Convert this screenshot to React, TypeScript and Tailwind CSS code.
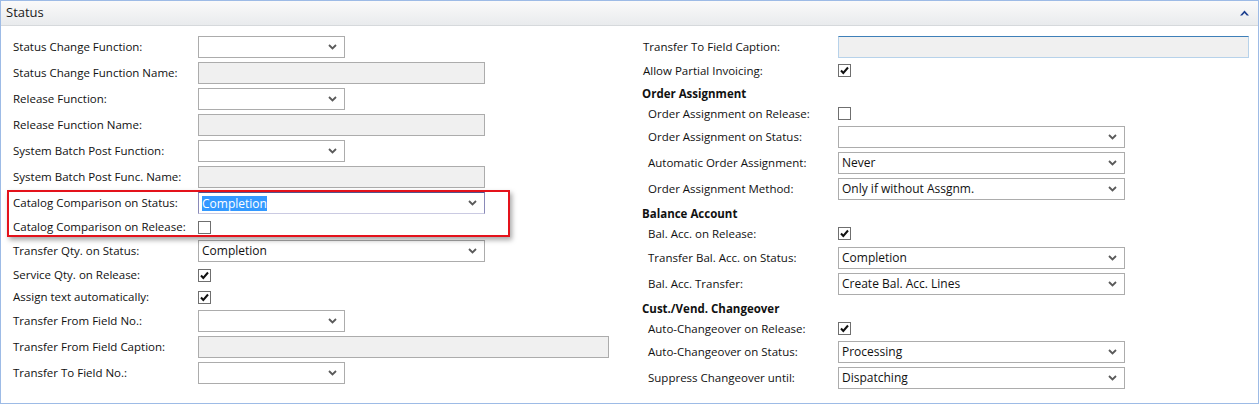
import React from 'react';

type Row =
  | { kind: 'select'; label: string; width: number; value?: string; focused?: boolean; indent?: boolean }
  | { kind: 'field'; label: string; width: number; focused?: boolean; indent?: boolean }
  | { kind: 'check'; label: string; checked: boolean; indent?: boolean }
  | { kind: 'head'; label: string };

const leftRows: Row[] = [
  { kind: 'select', label: 'Status Change Function:', width: 147 },
  { kind: 'field', label: 'Status Change Function Name:', width: 287 },
  { kind: 'select', label: 'Release Function:', width: 147 },
  { kind: 'field', label: 'Release Function Name:', width: 287 },
  { kind: 'select', label: 'System Batch Post Function:', width: 147 },
  { kind: 'field', label: 'System Batch Post Func. Name:', width: 287 },
  { kind: 'select', label: 'Catalog Comparison on Status:', width: 287, value: 'Completion', focused: true },
  { kind: 'check', label: 'Catalog Comparison on Release:', checked: false },
  { kind: 'select', label: 'Transfer Qty. on Status:', width: 287, value: 'Completion' },
  { kind: 'check', label: 'Service Qty. on Release:', checked: true },
  { kind: 'check', label: 'Assign text automatically:', checked: true },
  { kind: 'select', label: 'Transfer From Field No.:', width: 147 },
  { kind: 'field', label: 'Transfer From Field Caption:', width: 411 },
  { kind: 'select', label: 'Transfer To Field No.:', width: 147 },
];

const rightRows: Row[] = [
  { kind: 'field', label: 'Transfer To Field Caption:', width: 411, focused: true },
  { kind: 'check', label: 'Allow Partial Invoicing:', checked: true },
  { kind: 'head', label: 'Order Assignment' },
  { kind: 'check', label: 'Order Assignment on Release:', checked: false, indent: true },
  { kind: 'select', label: 'Order Assignment on Status:', width: 287, indent: true },
  { kind: 'select', label: 'Automatic Order Assignment:', width: 287, value: 'Never', indent: true },
  { kind: 'select', label: 'Order Assignment Method:', width: 287, value: 'Only if without Assgnm.', indent: true },
  { kind: 'head', label: 'Balance Account' },
  { kind: 'check', label: 'Bal. Acc. on Release:', checked: true, indent: true },
  { kind: 'select', label: 'Transfer Bal. Acc. on Status:', width: 287, value: 'Completion', indent: true },
  { kind: 'select', label: 'Bal. Acc. Transfer:', width: 287, value: 'Create Bal. Acc. Lines', indent: true },
  { kind: 'head', label: 'Cust./Vend. Changeover' },
  { kind: 'check', label: 'Auto-Changeover on Release:', checked: true, indent: true },
  { kind: 'select', label: 'Auto-Changeover on Status:', width: 287, value: 'Processing', indent: true },
  { kind: 'select', label: 'Suppress Changeover until:', width: 287, value: 'Dispatching', indent: true },
];

const Arrow = () => (
  <svg width="9" height="6" viewBox="0 0 9 6" className="shrink-0">
    <path d="M1 1 L4.5 4.5 L8 1" fill="none" stroke="#5a5a5a" strokeWidth="1.8" />
  </svg>
);

const CheckBox = ({ checked }: { checked: boolean }) => (
  <div className="w-[13px] h-[13px] border border-[#6f6f6f] bg-white flex items-center justify-center">
    {checked && (
      <svg width="11" height="11" viewBox="0 0 11 11">
        <path d="M2 5.5 L4.3 8 L9 2.5" fill="none" stroke="#111" strokeWidth="2" />
      </svg>
    )}
  </div>
);

const Control = ({ row }: { row: Row }) => {
  if (row.kind === 'check') return <CheckBox checked={row.checked} />;
  if (row.kind === 'field')
    return (
      <div
        style={{ width: row.width }}
        className={`h-[22px] bg-[#f0f0f0] border ${
          row.focused ? 'border-[#b7d2ea] border-t-[#3e7fb8]' : 'border-[#acacac]'
        }`}
      />
    );
  if (row.kind === 'select')
    return (
      <div
        style={{ width: row.width }}
        className={`h-[22px] bg-white border flex items-center justify-between pl-[3px] pr-[7px] ${
          row.focused ? 'border-[#8a8ab8] border-t-[#54548e] border-b-[#cacae2]' : 'border-[#acacac]'
        }`}
      >
        <span className={`text-[12px] ${row.focused ? 'bg-[#3399ff] text-white leading-[15px]' : ''}`}>
          {row.value}
        </span>
        <Arrow />
      </div>
    );
  return null;
};

const FormRow = ({ row, labelWidth, checkH }: { row: Row; labelWidth: number; checkH: string }) => {
  if (row.kind === 'head')
    return <div className="h-[21px] pt-[3px] flex items-center font-bold">{row.label}</div>;
  const h = row.kind === 'check' ? checkH : 'h-[26px]';
  return (
    <div className={`${h} flex items-center`}>
      <div style={{ width: labelWidth }} className={`shrink-0 ${row.indent ? 'pl-[6px]' : 'pl-[1px]'}`}>
        {row.label}
      </div>
      <Control row={row} />
    </div>
  );
};

export default function App() {
  return (
    <div
      className="w-[1259px] h-[404px] border border-[#9dbbe6] bg-white text-[11.5px] text-[#111] flex flex-col"
      style={{ fontFamily: '"Open Sans", "Noto Sans", sans-serif' }}
    >
      <div className="h-[25px] shrink-0 flex items-center justify-between pl-[5px] pr-[9px] bg-gradient-to-b from-[#fafafa] to-[#e9ebed] border-b border-[#d6d9dc]">
        <span className="text-[13px] text-[#1a1a1a]">Status</span>
        <svg width="9" height="6" viewBox="0 0 9 6">
          <path d="M0 5.5 L4.5 0.5 L9 5.5 L6.8 5.5 L4.5 3 L2.2 5.5 Z" fill="#1c3f8f" />
        </svg>
      </div>
      <div className="flex flex-1 relative">
        <div className="w-[629px] shrink-0 pl-[11px] pt-[8px]">
          {leftRows.map((r, i) => (
            <FormRow key={i} row={r} labelWidth={186} checkH="h-[22px]" />
          ))}
        </div>
        <div className="flex-1 pl-[12px] pt-[8px]">
          {rightRows.map((r, i) => (
            <FormRow key={i} row={r} labelWidth={196} checkH="h-[21.5px]" />
          ))}
        </div>
        <div className="absolute left-[6px] top-[164px] w-[503px] h-[47px] border-2 border-[#e4121b] shadow-[2px_3px_5px_rgba(0,0,0,0.35)] pointer-events-none" />
      </div>
    </div>
  );
}
